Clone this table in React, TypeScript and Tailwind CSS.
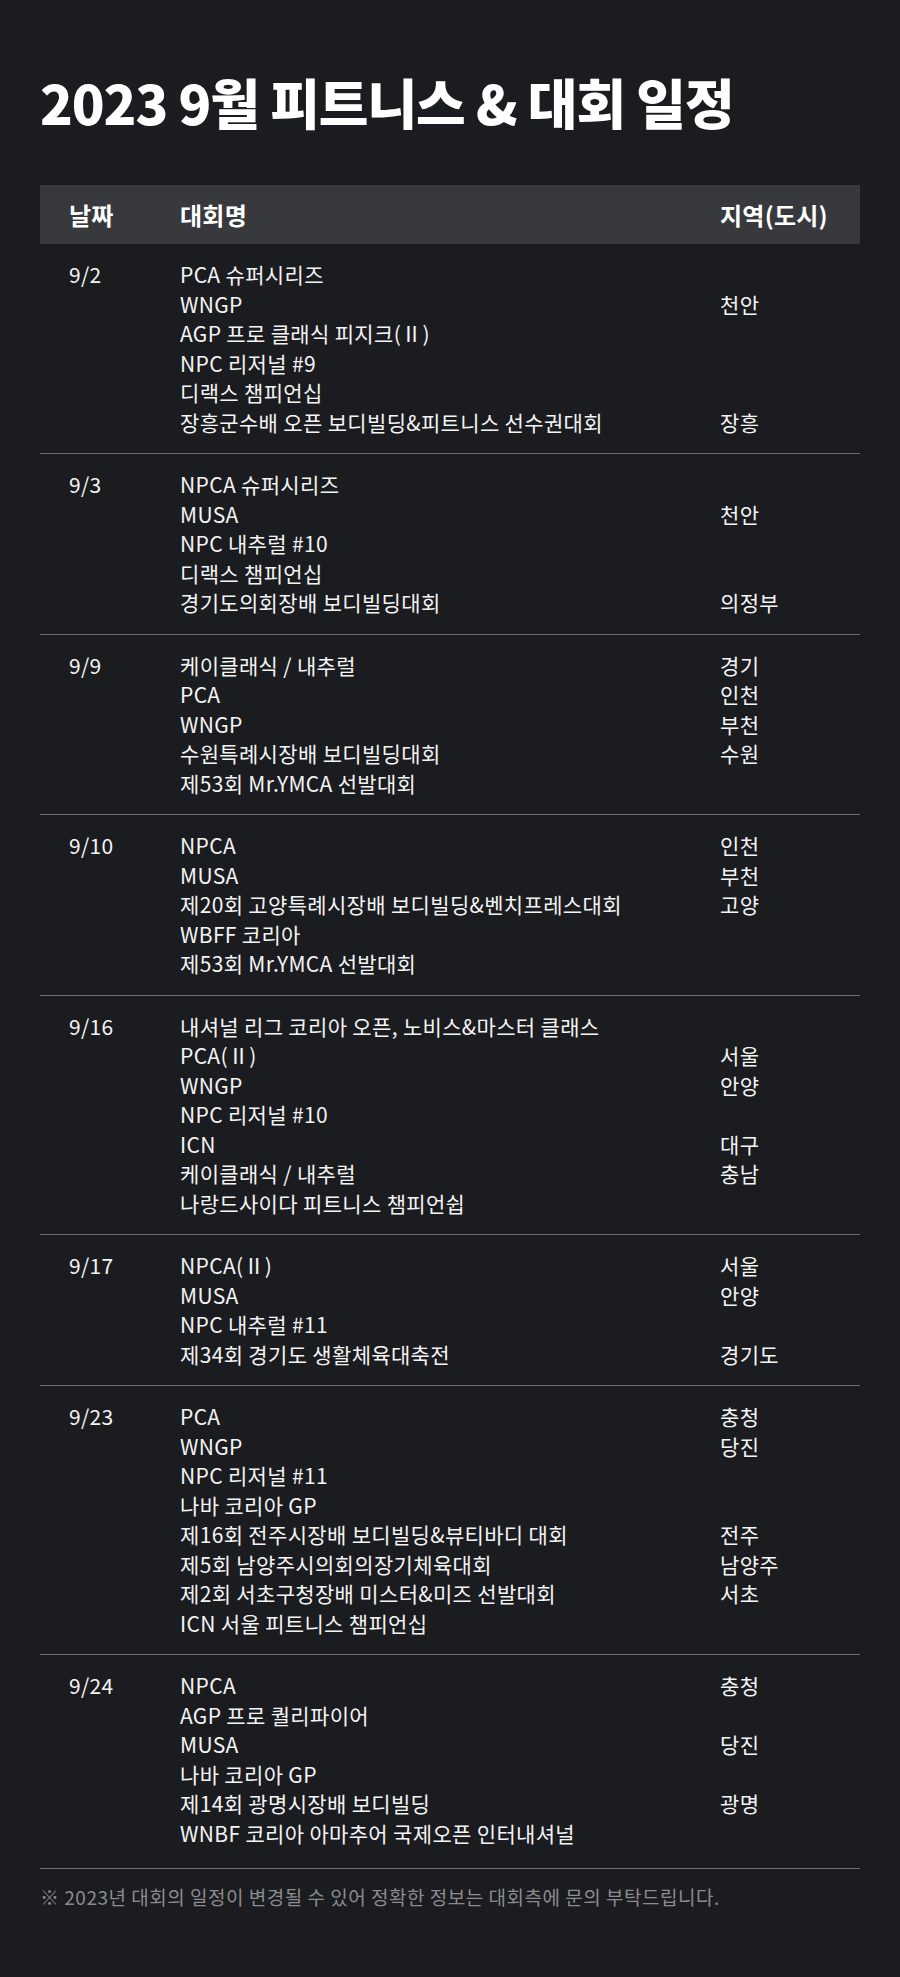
import React from "react";

type Line = [string, string];
type Row = { date: string; lines: Line[] };

const rows: Row[] = [
  {
    date: "9/2",
    lines: [
      ["PCA 슈퍼시리즈", ""],
      ["WNGP", "천안"],
      ["AGP 프로 클래식 피지크(Ⅱ)", ""],
      ["NPC 리저널 #9", ""],
      ["디랙스 챔피언십", ""],
      ["장흥군수배 오픈 보디빌딩&피트니스 선수권대회", "장흥"],
    ],
  },
  {
    date: "9/3",
    lines: [
      ["NPCA 슈퍼시리즈", ""],
      ["MUSA", "천안"],
      ["NPC 내추럴 #10", ""],
      ["디랙스 챔피언십", ""],
      ["경기도의회장배 보디빌딩대회", "의정부"],
    ],
  },
  {
    date: "9/9",
    lines: [
      ["케이클래식 / 내추럴", "경기"],
      ["PCA", "인천"],
      ["WNGP", "부천"],
      ["수원특례시장배 보디빌딩대회", "수원"],
      ["제53회 Mr.YMCA 선발대회", ""],
    ],
  },
  {
    date: "9/10",
    lines: [
      ["NPCA", "인천"],
      ["MUSA", "부천"],
      ["제20회 고양특례시장배 보디빌딩&벤치프레스대회", "고양"],
      ["WBFF 코리아", ""],
      ["제53회 Mr.YMCA 선발대회", ""],
    ],
  },
  {
    date: "9/16",
    lines: [
      ["내셔널 리그 코리아 오픈, 노비스&마스터 클래스", ""],
      ["PCA(Ⅱ)", "서울"],
      ["WNGP", "안양"],
      ["NPC 리저널 #10", ""],
      ["ICN", "대구"],
      ["케이클래식 / 내추럴", "충남"],
      ["나랑드사이다 피트니스 챔피언쉽", ""],
    ],
  },
  {
    date: "9/17",
    lines: [
      ["NPCA(Ⅱ)", "서울"],
      ["MUSA", "안양"],
      ["NPC 내추럴 #11", ""],
      ["제34회 경기도 생활체육대축전", "경기도"],
    ],
  },
  {
    date: "9/23",
    lines: [
      ["PCA", "충청"],
      ["WNGP", "당진"],
      ["NPC 리저널 #11", ""],
      ["나바 코리아 GP", ""],
      ["제16회 전주시장배 보디빌딩&뷰티바디 대회", "전주"],
      ["제5회 남양주시의회의장기체육대회", "남양주"],
      ["제2회 서초구청장배 미스터&미즈 선발대회", "서초"],
      ["ICN 서울 피트니스 챔피언십", ""],
    ],
  },
  {
    date: "9/24",
    lines: [
      ["NPCA", "충청"],
      ["AGP 프로 퀄리파이어", ""],
      ["MUSA", "당진"],
      ["나바 코리아 GP", ""],
      ["제14회 광명시장배 보디빌딩", "광명"],
      ["WNBF 코리아 아마추어 국제오픈 인터내셔널", ""],
    ],
  },
];

const font = { fontFamily: '"Noto Sans CJK KR", "Noto Sans", sans-serif' };

export default function App() {
  return (
    <div
      className="w-[900px] min-h-[1977px] bg-[#1b1c20] px-[40px] pt-[70px] text-[#f4f4f4]"
      style={font}
    >
      <h1 className="text-[54px] font-black leading-[64px] tracking-[-0.02em] text-white">
        2023 9월 피트니스 &amp; 대회 일정
      </h1>
      <div className="mt-[51px] flex h-[59px] items-center bg-[#38393d] text-[24px] font-bold tracking-[0.01em] text-white">
        <div className="w-[140px] pl-[29px]">날짜</div>
        <div className="flex-1">대회명</div>
        <div className="w-[140px]">지역(도시)</div>
      </div>
      <div>
        {rows.map((r, idx) => (
          <div
            key={r.date}
            className={
              idx === rows.length - 1
                ? "flex border-b border-[#6e6e70] pt-[16px] pb-[20px] text-[21px] leading-[29.5px] tracking-[0.016em]"
                : "flex border-b border-[#6e6e70] pt-[16px] pb-[16px] text-[21px] leading-[29.5px] tracking-[0.016em]"
            }
          >
            <div className="w-[140px] pl-[29px]">{r.date}</div>
            <div className="flex-1">
              {r.lines.map((l, i) => (
                <div key={i} className="flex">
                  <div className="flex-1">{l[0]}</div>
                  <div className="w-[140px]">{l[1]}</div>
                </div>
              ))}
            </div>
          </div>
        ))}
      </div>
      <p className="mt-[13px] text-[19px] leading-[30px] tracking-[0.027em] text-[#8c8c8e]">
        ※ 2023년 대회의 일정이 변경될 수 있어 정확한 정보는 대회측에 문의 부탁드립니다.
      </p>
    </div>
  );
}
